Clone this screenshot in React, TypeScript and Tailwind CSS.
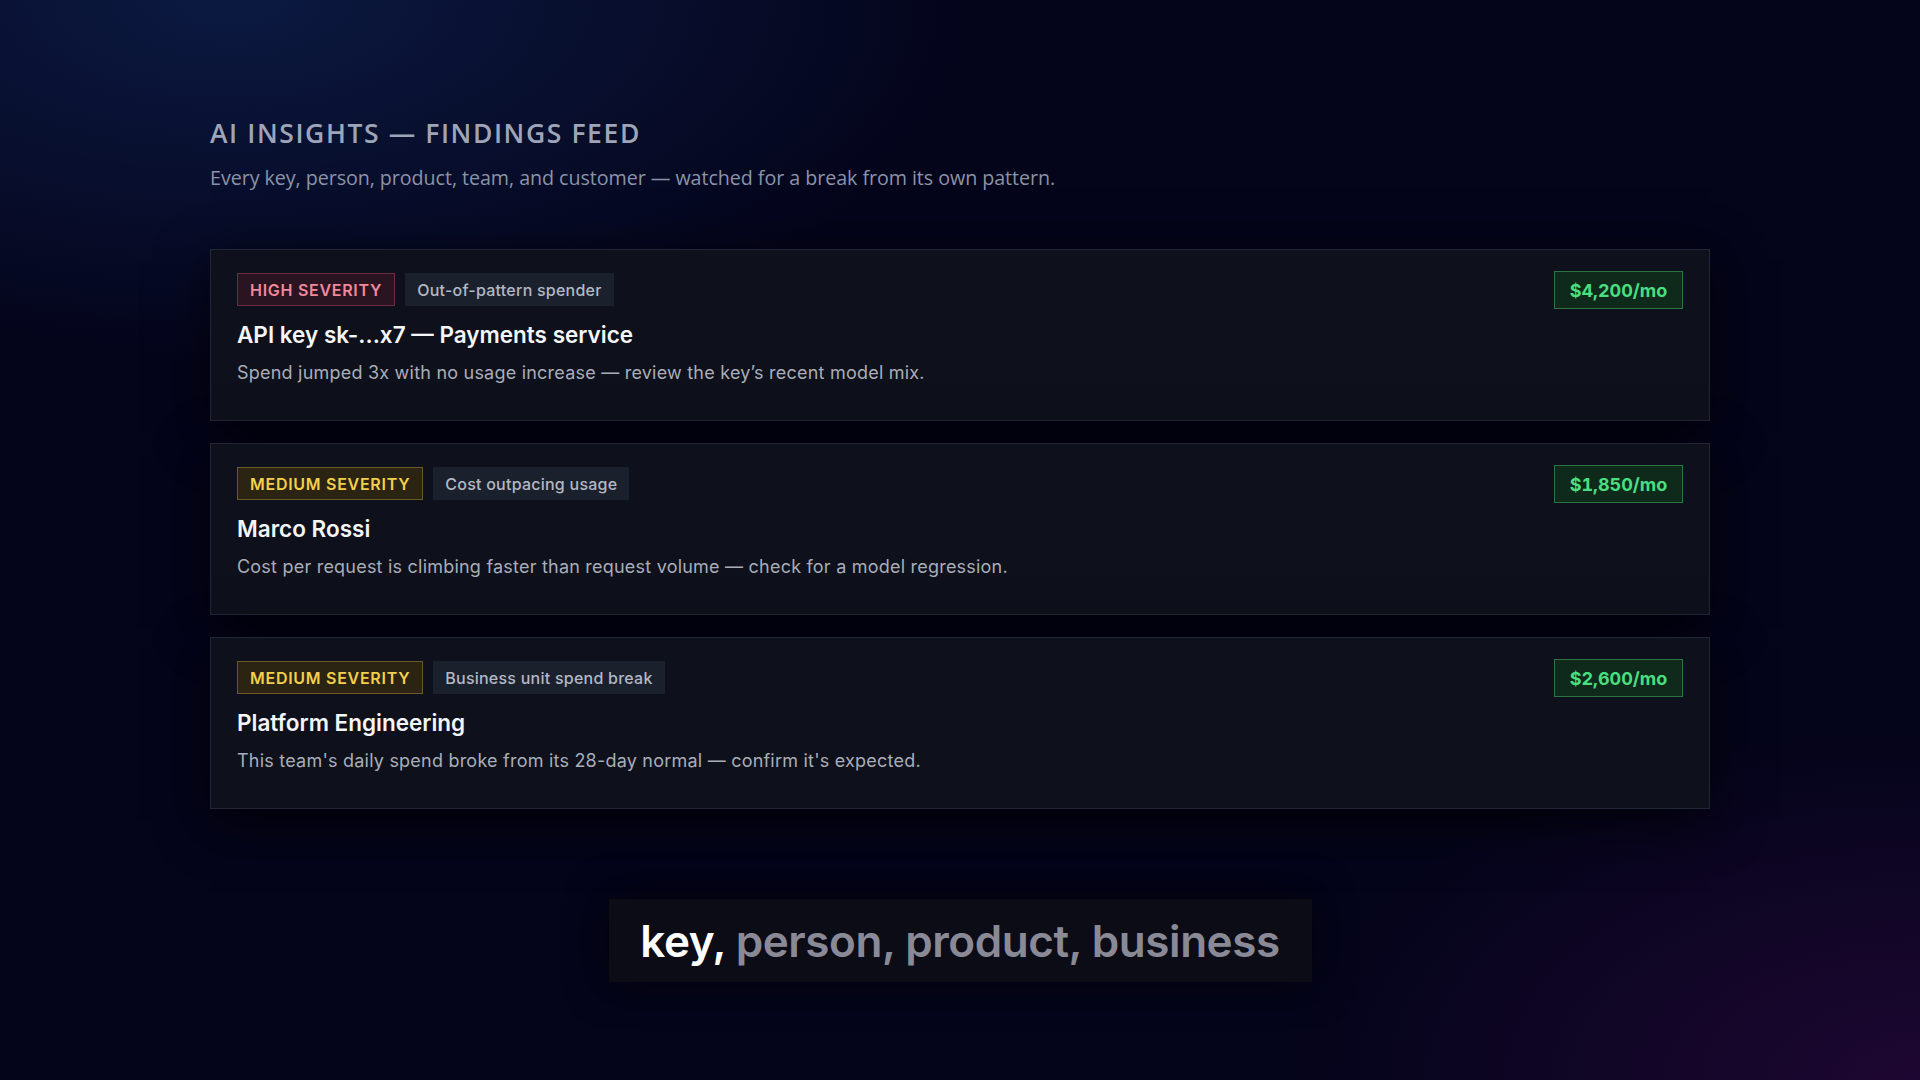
import React from "react";

type Finding = {
  severity: "high" | "medium";
  tag: string;
  title: string;
  body: string;
  cost: string;
};

const findings: Finding[] = [
  {
    severity: "high",
    tag: "Out-of-pattern spender",
    title: "API key sk-...x7 — Payments service",
    body: "Spend jumped 3x with no usage increase — review the key’s recent model mix.",
    cost: "$4,200/mo",
  },
  {
    severity: "medium",
    tag: "Cost outpacing usage",
    title: "Marco Rossi",
    body: "Cost per request is climbing faster than request volume — check for a model regression.",
    cost: "$1,850/mo",
  },
  {
    severity: "medium",
    tag: "Business unit spend break",
    title: "Platform Engineering",
    body: "This team's daily spend broke from its 28-day normal — confirm it's expected.",
    cost: "$2,600/mo",
  },
];

function SeverityBadge({ level }: { level: Finding["severity"] }) {
  if (level === "high") {
    return (
      <span className="inline-flex h-[33px] items-center border border-[#6b2c40] bg-[#2a1421] px-[12px] text-[16px] font-semibold tracking-[0.045em] text-[#f0899c]">
        HIGH SEVERITY
      </span>
    );
  }
  return (
    <span className="inline-flex h-[33px] items-center border border-[#6a5a26] bg-[#2b2412] px-[12px] text-[16px] font-semibold tracking-[0.045em] text-[#f3d04c]">
      MEDIUM SEVERITY
    </span>
  );
}

function FindingCard({ f }: { f: Finding }) {
  return (
    <div className="flex h-[172px] items-start justify-between border border-[#222636] bg-[#0e111b] pl-[26px] pr-[26px] pt-[23px] shadow-[0_12px_48px_rgba(0,0,0,0.7)]">
      <div className="flex flex-col">
        <div className="flex items-center gap-[10px]">
          <SeverityBadge level={f.severity} />
          <span className="inline-flex h-[33px] items-center bg-[#1b202d] px-[12px] text-[16px] font-medium tracking-[0.015em] text-[#b3b8c4]">
            {f.tag}
          </span>
        </div>
        <h2 className="mt-[14px] text-[22.5px] font-semibold leading-[30px] text-[#f4f5f8]">
          {f.title}
        </h2>
        <p className="mt-[11px] text-[18px] leading-[24px] tracking-[0.012em] text-[#a9adb8]">
          {f.body}
        </p>
      </div>
      <span className="-mt-[2px] inline-flex h-[38px] w-[129px] items-center justify-center border border-[#2e7443] bg-[#0f2a1b] text-[18px] font-bold tabular-nums text-[#4ade80]">
        {f.cost}
      </span>
    </div>
  );
}

export default function App() {
  return (
    <div className="relative min-h-[1080px] w-full overflow-hidden bg-[#04041a] [font-family:Inter,'Liberation_Sans',sans-serif]">
      {/* ambient glows */}
      <div className="pointer-events-none absolute inset-0 bg-[radial-gradient(ellipse_1100px_520px_at_12%_0%,rgba(14,32,78,0.75),transparent_70%)]" />
      <div className="pointer-events-none absolute inset-0 bg-[radial-gradient(ellipse_900px_500px_at_100%_100%,rgba(40,8,60,0.7),transparent_70%)]" />

      <div className="relative mx-auto flex w-[1500px] flex-col pt-[117px]">
        <h1 className="text-[26.5px] font-semibold leading-[32px] tracking-[0.06em] text-[#9ea5b8] [font-family:'Open_Sans',sans-serif]">
          AI INSIGHTS — FINDINGS FEED
        </h1>
        <p className="mt-[16px] text-[19.7px] leading-[26px] tracking-[-0.003em] text-[#8b93a8] [font-family:'Open_Sans',sans-serif]">
          Every key, person, product, team, and customer — watched for a break from its own pattern.
        </p>

        <div className="mt-[58px] flex flex-col gap-[22px]">
          {findings.map((f) => (
            <FindingCard key={f.title} f={f} />
          ))}
        </div>

        <div className="mt-[90px] flex justify-center">
          <div className="flex h-[83px] w-[703px] items-center justify-center bg-[#0c0c17] shadow-[0_0_40px_rgba(0,0,0,0.6)]">
            <span className="text-[44px] font-semibold tracking-[-0.01em] text-[#8a8a97]">
              <span className="text-white">key,</span> person, product, business
            </span>
          </div>
        </div>
      </div>
    </div>
  );
}
